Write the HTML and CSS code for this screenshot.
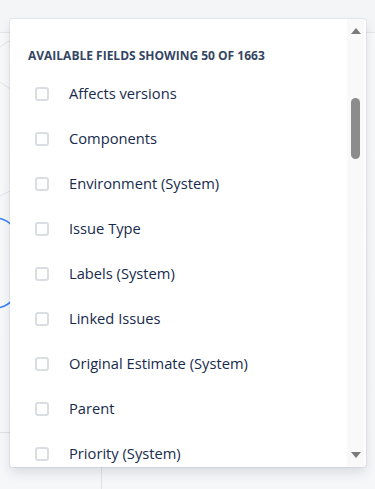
FILE: index.html
```html
<!DOCTYPE html>
<html>
<head>
<meta charset="utf-8">
<link rel="stylesheet" href="styles.css">
</head>
<body>
<div class="backdrop">
  <svg class="bg-art" width="375" height="489" viewBox="0 0 375 489">
    <line x1="0" y1="32.5" x2="375" y2="32.5" stroke="#e4e6ea" stroke-width="1"/>
    <line x1="0" y1="432.5" x2="120" y2="432.5" stroke="#dfe1e5" stroke-width="1"/>
    <line x1="101.5" y1="440" x2="101.5" y2="489" stroke="#dfe1e5" stroke-width="1"/>
    <path d="M0 47 Q6 42 12 40" fill="none" stroke="#e2e4e8" stroke-width="1"/>
    <path d="M0 82 Q6 86 12 90" fill="none" stroke="#e2e4e8" stroke-width="1"/>
    <path d="M0 196 Q6 193 12 190" fill="none" stroke="#e2e4e8" stroke-width="1"/>
    <path d="M-2 218 Q8 220 12 226" fill="none" stroke="#2f7df6" stroke-width="1.5"/>
    <path d="M-2 308 Q8 306 12 300" fill="none" stroke="#2f7df6" stroke-width="1.5"/>
  </svg>
</div>
<div class="popup">
  <div class="list">
    <div class="header">AVAILABLE FIELDS SHOWING 50 OF 1663</div>
    <div class="row"><span class="box"></span><span class="label">Affects versions</span></div>
    <div class="row"><span class="box"></span><span class="label">Components</span></div>
    <div class="row"><span class="box"></span><span class="label">Environment (System)</span></div>
    <div class="row"><span class="box"></span><span class="label">Issue Type</span></div>
    <div class="row"><span class="box"></span><span class="label">Labels (System)</span></div>
    <div class="row"><span class="box"></span><span class="label">Linked Issues</span></div>
    <div class="row"><span class="box"></span><span class="label">Original Estimate (System)</span></div>
    <div class="row"><span class="box"></span><span class="label">Parent</span></div>
    <div class="row"><span class="box"></span><span class="label">Priority (System)</span></div>
  </div>
  <div class="scrollbar">
    <span class="arrow up"></span>
    <div class="track"><span class="thumb"></span></div>
    <span class="arrow down"></span>
  </div>
</div>
</body>
</html>
```
FILE: styles.css
```css
html, body {
  margin: 0;
  padding: 0;
}
body {
  width: 375px;
  height: 489px;
  overflow: hidden;
  background: #f4f5f7;
  font-family: "Open Sans", "Noto Sans", sans-serif;
  position: relative;
}
.backdrop {
  position: absolute;
  left: 0;
  top: 0;
  width: 375px;
  height: 489px;
  background: linear-gradient(#f4f5f7 0, #f4f5f7 32px, #f8f9fa 33px, #f6f7f9 100%);
}
.bg-art {
  display: block;
}
.popup {
  position: absolute;
  left: 10px;
  top: 19px;
  width: 356px;
  height: 448px;
  background: #ffffff;
  border-radius: 3px;
  box-shadow: 0 0 0 1px rgba(9, 30, 66, 0.06), 0 6px 12px rgba(9, 30, 66, 0.12);
  display: flex;
  overflow: hidden;
}
.list {
  flex: 1;
  overflow: hidden;
  padding-left: 18px;
}
.header {
  padding-top: 29px;
  height: 23px;
  line-height: 16px;
  font-size: 12px;
  font-weight: 700;
  color: #344563;
  letter-spacing: 0;
}
.row {
  height: 45px;
  display: flex;
  align-items: center;
  padding-left: 7px;
}
.box {
  width: 14px;
  height: 14px;
  box-sizing: border-box;
  border: 2px solid #dadde2;
  border-radius: 3px;
  flex: none;
}
.label {
  margin-left: 20px;
  margin-top: -2px;
  font-size: 14.7px;
  color: #172b4d;
  line-height: 20px;
}
.scrollbar {
  width: 17px;
  margin-right: 2px;
  background: #f9f9f9;
  display: flex;
  flex-direction: column;
  align-items: center;
}
.arrow {
  width: 0;
  height: 0;
  border-left: 5px solid transparent;
  border-right: 5px solid transparent;
  flex: none;
}
.arrow.up {
  margin-top: 9px;
  border-bottom: 6px solid #7b7b7b;
}
.arrow.down {
  margin-bottom: 9px;
  border-top: 6px solid #7b7b7b;
}
.track {
  flex: 1;
  width: 100%;
  display: flex;
  justify-content: center;
}
.thumb {
  margin-top: 64px;
  width: 9px;
  height: 61px;
  border-radius: 5px;
  background: #8c8c8c;
}
```
